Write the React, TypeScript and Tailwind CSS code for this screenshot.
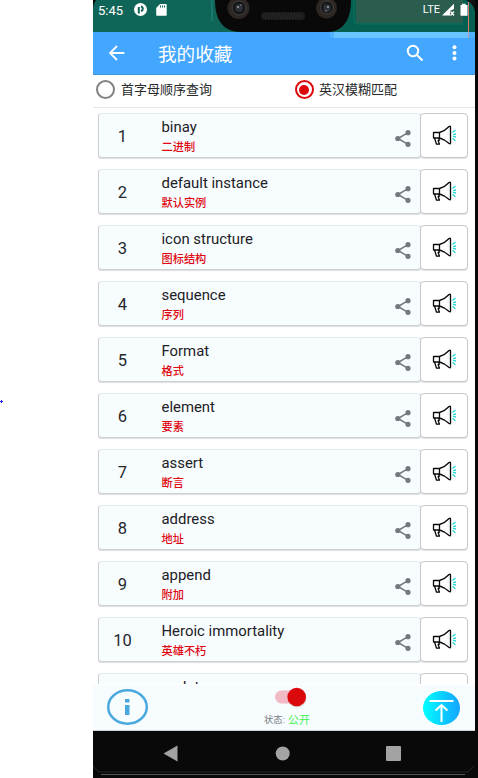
const words: [string, string][] = [
  ['binay', '二进制'],
  ['default instance', '默认实例'],
  ['icon structure', '图标结构'],
  ['sequence', '序列'],
  ['Format', '格式'],
  ['element', '要素'],
  ['assert', '断言'],
  ['address', '地址'],
  ['append', '附加'],
  ['Heroic immortality', '英雄不朽'],
  ['update', ''],
];

function StatusBar() {
  return (
    <div className="relative flex h-8 shrink-0 items-start bg-[#0f6658] text-white">
      <svg className="absolute inset-0" width="382" height="32" viewBox="0 0 382 32">
        <path d="M0 0h3Q0 4 0 10z" fill="#080808" />
        <path d="M119 0v21" stroke="#16786f" strokeWidth="2" />
        <path d="M257 0H382V32H242Q257 29 257 0Z" fill="#066052" />
        <path d="M263 0H370V23H263Z" fill="#2b5d4e" />
        <path d="M261 0V20Q261 24 266 24H370" fill="none" stroke="#087461" />
        <path d="M122 0C122 20 130 32 148 32H234C250 32 258 20 258 0Z" fill="#090909" />
        <g fill="#2e2622">
          <circle cx="145.500" cy="8" r="11" />
          <circle cx="233.500" cy="8" r="10.500" />
        </g>
        <g fill="#14171a" stroke="#45413e">
          <circle cx="146" cy="8" r="7" />
          <circle cx="234" cy="7.500" r="6.500" />
        </g>
        <g fill="#30343a" stroke="#202226">
          <circle cx="146" cy="8" r="4" />
          <circle cx="234" cy="8" r="4" />
        </g>
        <g fill="#a9a0a4">
          <circle cx="145" cy="7" r="1" />
          <circle cx="148" cy="5" r=".7" />
          <circle cx="235" cy="7" r="1" />
          <circle cx="233" cy="11" r=".7" />
        </g>
        <rect x="168" y="12" width="44" height="8" rx="4" fill="#1b1b1b" />
        <path d="M171 14h39M170 16h41M172 18h37" stroke="#3b3b3b" strokeDasharray="1 2" />
        <path d="M375.500 2v30" stroke="#d8796f" />
        <path d="M373 0h9v11Q380 3 373 0Z" fill="#101211" />
      </svg>
      <span className="relative ml-[5px] mt-[3px] w-[36px] text-[13px] leading-[15px]">5:45</span>
      <svg className="relative mt-[3px]" width="14" height="14" viewBox="0 0 14 14">
        <circle cx="6.500" cy="6.500" r="6.500" fill="white" />
        <path d="M4.800 10.500V4M7 3.500a2.300 2.300 0 0 1 0 4.500" fill="none" stroke="#0f6658" strokeWidth="2" />
      </svg>
      <svg className="relative ml-2 mt-1" width="11" height="12" viewBox="0 0 11 12">
        <path d="M4 0h6q.7 0 .7.700v10.300q0 .8-.8.800H1q-.8 0-.8-.8V4z" fill="white" />
        <path d="M4.500 1.500v2M6.500 1.500v2M8.500 1.500v2" stroke="#0f6658" />
      </svg>
      <span className="relative ml-auto mt-[3px] text-[11px] leading-[14px]">LTE</span>
      <svg className="relative ml-[2px] mr-[6px] mt-[3px]" width="27" height="14" viewBox="0 0 27 14">
        <path d="M0 12.500 12 .8V6L8 8v4.500z" fill="white" />
        <path d="m8.500 8.500 3.500 4m0-4-3.500 4" stroke="white" strokeWidth="1.300" />
        <path d="M20 2V.8h3.500V2h2v10.800h-7V2z" fill="white" />
      </svg>
    </div>
  );
}

function Header() {
  return (
    <header className="relative flex h-[43px] shrink-0 items-center border-b border-[#4295df] bg-[#43a6ff] text-white">
      <svg className="absolute right-0 top-0" width="145" height="6">
        <path d="M0 0h145v6H0z" fill="#53b2ff" />
        <path d="M4 0h134v6H4z" fill="#68c5ff" />
        <path d="M138.500 0v6" stroke="#bd9fc4" />
      </svg>
      <svg className="ml-[15.500px]" width="16" height="16" viewBox="0 0 16 16" fill="none" stroke="white" strokeWidth="1.900">
        <path d="M15.400 8H1.500M8 1 1 8l7 7" />
      </svg>
      <h1 className="ml-[33.500px] mt-[3px] text-[18.600px] leading-6">我的收藏</h1>
      <svg className="ml-auto" width="18" height="18" viewBox="0 0 18 18" fill="none" stroke="white" strokeWidth="2">
        <circle cx="7" cy="7" r="5.200" />
        <path d="m11 11 5.500 5.500" />
      </svg>
      <svg className="ml-[28px] mr-[18px]" width="5" height="16" viewBox="0 0 5 16" fill="white">
        <circle cx="2.500" cy="2.200" r="2" /><circle cx="2.500" cy="7.900" r="2" /><circle cx="2.500" cy="13.600" r="2" />
      </svg>
    </header>
  );
}

function ShareIcon() {
  return (
    <svg className="mr-[9px] mt-[5px]" width="16" height="17" viewBox="0 0 16 17" fill="#74777b">
      <path d="m13 2.700-10 5.800 10 5.800" fill="none" stroke="#74777b" strokeWidth="1.500" />
      <circle cx="13" cy="2.700" r="2.600" /><circle cx="2.800" cy="8.500" r="2.600" /><circle cx="13" cy="14.300" r="2.600" />
    </svg>
  );
}

function Megaphone() {
  return (
    <svg width="24" height="22" viewBox="0 0 24 22" fill="none" stroke="#080808" strokeWidth="1.300" strokeLinejoin="round">
      <path d="M1.500 7.500h6V13h-6zM7.500 7.500Q13 6 16.800 1.800q1.700-1.300 1.700.200v16q0 1.500-1.700.300Q13 14.500 7.500 13" />
      <path d="m2.500 13 2 6.200h3l-1.400-3.700 1.400-.300-1-2.200" />
      <path d="m20.500 7.500 3-2.500M21 9.600l3-.600M21 11.400l3 .600M20.500 13.500l3 2.300" stroke="#25d7dc" strokeWidth="1.300" />
    </svg>
  );
}

function WordRow({ index, word }: { index: number; word: [string, string] }) {
  return (
    <div className="mb-[11px] flex h-[45px] shrink-0 pl-[5px]">
      <div className="flex w-[323px] items-center rounded-[3px] border border-[#cbd0d5] border-t-[#e3eaf0] bg-[#f7fcff] shadow-[0_1px_1px_#dedede]">
        <span className="mt-[3px] w-[47px] text-center text-[16.500px] text-[#24272b]">{index}</span>
        <div className="ml-[15.500px] h-full flex-1">
          <div className="mt-[4px] text-[14.900px] leading-[19px] text-[#1d2024]">{word[0]}</div>
          <div className="mt-[3px] text-[11.200px] font-medium leading-[15px] text-[#df0710]">{word[1]}</div>
        </div>
        <ShareIcon />
      </div>
      <button className="-ml-px flex w-12 items-center justify-center rounded-[4px] border border-[#c7c8cb] bg-white shadow-[0_1px_1px_#e4e4e4]">
        <Megaphone />
      </button>
    </div>
  );
}

function BottomBar() {
  return (
    <footer className="flex h-[46px] shrink-0 items-start justify-between border-b border-[#cbd3dc] bg-[#f7fcff]">
      <svg className="ml-[13px] mt-[3px]" width="43" height="38" viewBox="0 0 43 38">
        <ellipse cx="21.500" cy="19" rx="19.300" ry="16.700" fill="none" stroke="#4ba9df" strokeWidth="2.500" />
        <path d="M19 11h4.500v3.500H19zM19 17h4.500v10H19z" fill="#4ba9df" />
      </svg>
      <div className="ml-[3px] flex w-[60px] flex-col items-center">
        <svg className="ml-[8px]" width="34" height="27" viewBox="0 0 34 27">
          <rect x="1" y="5.500" width="27" height="13" rx="6.500" fill="#f2bac4" />
          <circle cx="23" cy="13" r="9.500" fill="#bbb" opacity=".55" />
          <circle cx="22.700" cy="12" r="9.300" fill="#dc090c" />
        </svg>
        <div className="flex h-4 items-center whitespace-nowrap text-[9.300px] text-[#777e84]">
          状态:<span className="ml-[3px] mt-[3px] text-[11px] text-[#3df253]">公开</span>
        </div>
      </div>
      <svg className="mr-[14px] mt-[5px]" width="39" height="36" viewBox="0 0 39 36">
        <defs>
          <linearGradient id="topButton"><stop stopColor="#00ffff" /><stop offset="1" stopColor="#14a4ff" /></linearGradient>
        </defs>
        <ellipse cx="19.500" cy="18" rx="18.500" ry="17" fill="url(#topButton)" />
        <path d="M7.500 11h24M19.500 15v17M13.500 20.500l6-5.500 6 5.500" fill="none" stroke="white" strokeWidth="2" />
      </svg>
    </footer>
  );
}

export default function App() {
  return (
    <div className="flex h-[778px] w-[478px] overflow-hidden bg-white font-[Roboto,'Noto_Sans_CJK_SC',sans-serif]">
      <aside className="w-[93px] shrink-0 pt-[400px]">
        <svg width="3" height="3"><path d="M0 1.500h3M1.500 0v3" stroke="#2421ee" /></svg>
      </aside>
      <div className="flex w-[385px] flex-col bg-[#080808]">
        <main className="flex h-[731px] w-[382px] flex-col bg-white">
          <StatusBar />
          <Header />
          <div className="flex h-[33px] shrink-0 items-center border-b border-[#e7e7e7] pb-[3px] text-[13px] text-[#27292b]">
            <label className="flex w-[198px] items-center pl-[3px]">
              <span className="size-[19px] rounded-full border-2 border-[#828282]" />
              <span className="ml-[6px] mt-px">首字母顺序查询</span>
            </label>
            <label className="flex items-center pl-[3.500px]">
              <span className="flex size-[19px] items-center justify-center rounded-full border-2 border-[#dc090c]">
                <span className="size-[10px] rounded-full bg-[#dc090c]" />
              </span>
              <span className="ml-[5.500px] mt-px">英汉模糊匹配</span>
            </label>
          </div>
          <section className="flex h-[576px] shrink-0 flex-col overflow-hidden pt-[5px]">
            {words.map((word, i) => <WordRow key={word[0]} index={i + 1} word={word} />)}
          </section>
          <div className="h-px shrink-0 bg-white" />
          <BottomBar />
        </main>
        <nav className="h-[47px]">
          <svg width="385" height="47" viewBox="0 0 385 47">
            <path d="M0 0h385v47H0z" fill="#090909" />
            <g fill="#a3a3a3">
              <path d="m70.500 22.500 14-8v16z" />
              <circle cx="189.700" cy="22.500" r="7" />
              <rect x="293" y="15" width="15" height="15" rx="1" />
            </g>
            <path d="M0 35 6 41H375l6-6" fill="none" stroke="#262626" />
            <path d="M8 43.500h364" stroke="#555" />
          </svg>
        </nav>
      </div>
    </div>
  );
}
